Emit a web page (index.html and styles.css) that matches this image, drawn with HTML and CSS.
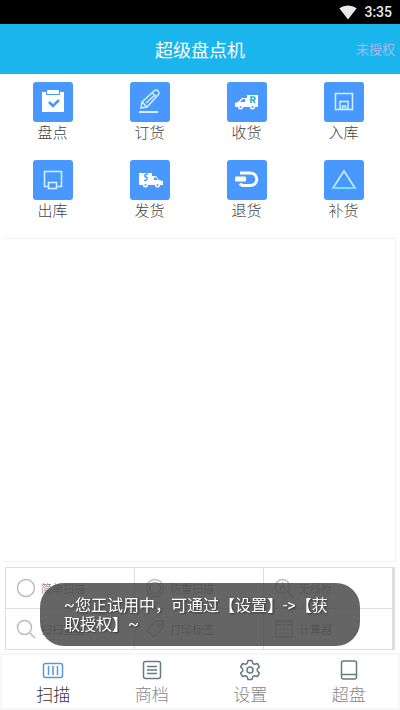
FILE: index.html
```html
<!DOCTYPE html>
<html lang="zh-CN">
<head>
<meta charset="utf-8">
<meta name="viewport" content="width=device-width, initial-scale=1">
<title>超级盘点机</title>
<link rel="stylesheet" href="styles.css">
</head>
<body>
<div class="status">
  <svg width="18" height="15" viewBox="0 0 18 15" aria-hidden="true"><path d="M9 14.500 0.300 3.300Q4 .5 9 .5t8.700 2.800z" fill="#e8e8e8"/></svg>
  <time>3:35</time>
</div>
<header class="header">
  <h1>超级盘点机</h1>
  <a class="license" href="#license">未授权</a>
</header>
<main class="main">
  <div class="apps">
    <button class="app"><span class="tile"><svg viewBox="0 0 40 40"><path fill="#fff" d="M9 10h4v3h14v-3h4v20H9z"/><rect x="14" y="8" width="12" height="4" rx="1" fill="#fff"/><path d="m16 20 4 4 6-6" fill="none" stroke="#4898ff" stroke-width="2.500"/></svg></span>盘点</button>
    <button class="app"><span class="tile"><svg viewBox="0 0 40 40" class="line"><path d="m11 26 1-6L24 9q3-2 4 0 2 2 0 4L17 25zM12 20l5 5M22 11l5 4M16 21l9-8"/><path d="M9 30h19" stroke-width="2"/></svg></span>订货</button>
    <button class="app"><span class="tile"><svg viewBox="0 0 40 40"><path fill="#fff" d="M20 13h11v12h-3a2.500 2.500 0 0 1-5 0h-7a2.500 2.500 0 0 1-5 0H8v-4l3-1 4-4h5z"/><path fill="#4898ff" d="m13 20 3-3h2v3z"/><path d="M24 21v-6h2q2 0 2 1.500T26 18h-2m2 0 2 3" fill="none" stroke="#29adc9" stroke-width="1.500"/><circle cx="13.500" cy="25" r="1" fill="#4898ff"/><circle cx="25.500" cy="25" r="1" fill="#4898ff"/></svg></span>收货</button>
    <button class="app"><span class="tile"><svg viewBox="0 0 40 40" class="line"><path d="M11.500 11.500h17v16h-17zM16 27.500v-8h8v8M18.500 27v-3h3v3"/></svg></span>入库</button>
    <button class="app"><span class="tile"><svg viewBox="0 0 40 40" class="line"><path d="M15.500 26.500h-4v-15h17v15h-4M15.500 22.500h8v6h-8z"/></svg></span>出库</button>
    <button class="app"><span class="tile"><svg viewBox="0 0 40 40"><path fill="#fff" d="M9 13h13v3h4l3 4 4 1v4h-3a2.500 2.500 0 0 1-5 0h-7a2.500 2.500 0 0 1-5 0H9z"/><path fill="#4898ff" d="M24 17.500h2l2 2.500h-4z"/><path d="M18 14q-4 0-3 2.500l2 1q1 3-3 3" fill="none" stroke="#4898ff" stroke-width="1.500"/><circle cx="15.500" cy="25" r="1" fill="#4898ff"/><circle cx="27.500" cy="25" r="1" fill="#4898ff"/></svg></span>发货</button>
    <button class="app"><span class="tile"><svg viewBox="0 0 40 40"><path d="M13 13h10c9 0 9 12.500 0 12.500h-6q-3 0-4-2" fill="none" stroke="#fff" stroke-width="3"/><rect x="8" y="16.500" width="11" height="5" rx="1" fill="#fff"/></svg></span>退货</button>
    <button class="app"><span class="tile"><svg viewBox="0 0 40 40" class="line"><path d="m20 11 11 17H9z"/><path d="M9 28h22" stroke="#62e5f5"/></svg></span>补货</button>
  </div>
  <section class="panel" aria-label="记录"></section>
  <div class="tools">
    <button class="tool"><svg viewBox="0 0 20 20"><circle cx="10" cy="10" r="8.500"/></svg>简单扫描</button>
    <button class="tool"><svg viewBox="0 0 20 20"><circle cx="10" cy="10" r="8.500"/><circle cx="10" cy="10" r="5.500"/></svg>防重扫描</button>
    <button class="tool"><svg viewBox="0 0 20 20"><circle cx="8.500" cy="8.500" r="7"/><path d="m14 14 5 5M6 12l2.500-7 2.500 7M7 9h3"/></svg>无线枪</button>
    <button class="tool"><svg viewBox="0 0 20 20"><circle cx="8.500" cy="8.500" r="7"/><path d="m14 14 5 5"/></svg>扫扫查查</button>
    <button class="tool"><svg viewBox="0 0 20 20"><path d="m2 11 9-9h7v7l-9 9z"/><circle cx="14" cy="6" r="1.500"/></svg>打印标签</button>
    <button class="tool"><svg viewBox="0 0 20 20"><rect x="2" y="2" width="16" height="16" rx="1"/><path d="M2 6h16M5 10h2m2 0h2m2 0h2M5 14h2m2 0h2m2 0h2" /></svg>计算器</button>
  </div>
</main>
<nav class="nav">
  <a class="active" href="#scan"><svg viewBox="0 0 22 22" stroke="#5795e0"><rect x="1.500" y="4.500" width="19" height="14" rx="2"/><path d="M6.500 7v9M11 7v9M15.500 7v9"/></svg>扫描</a>
  <a href="#files"><svg viewBox="0 0 22 22"><rect x="2.500" y="2.500" width="17" height="17" rx="2"/><path d="M6 7.500h10M6 11h10M6 14.500h10"/></svg>商档</a>
  <a href="#settings"><svg viewBox="0 0 22 22"><path d="M9 1.500h4l.8 2.800 1.700 1 2.900-.8 2 3.400-2.100 2.100v2l2.100 2.100-2 3.400-2.900-.8-1.700 1-.8 2.800H9l-.8-2.800-1.700-1-2.900.8-2-3.400L3.700 12v-2L1.600 7.900l2-3.400 2.900.8 1.700-1z" stroke-linejoin="round"/><circle cx="11" cy="11" r="3"/></svg>设置</a>
  <a href="#super"><svg viewBox="0 0 22 22"><rect x="3.500" y="2" width="15" height="18" rx="2"/><path d="M3.500 15.500h15"/></svg>超盘</a>
</nav>
<div class="toast" role="status">~您正试用中，可通过【设置】-&gt;【获取授权】~</div>
</body>
</html>
```
FILE: styles.css
```css
* { box-sizing: border-box; }
body {
  margin: 0;
  min-height: 100vh;
  display: flex;
  flex-direction: column;
  background: #fff;
  color: #444;
  font-family: "Noto Sans CJK SC", sans-serif;
  font-weight: 300;
}
button {
  border: 0;
  padding: 0;
  background: none;
  color: inherit;
  font-family: inherit;
  font-weight: inherit;
}
a { color: inherit; text-decoration: none; }
.status {
  height: 24px;
  padding: 0 8px;
  display: flex;
  justify-content: flex-end;
  align-items: center;
  gap: 7px;
  background: #000;
  color: #e8e8e8;
  font: 500 14px/24px Roboto, sans-serif;
}
.header {
  height: 50px;
  padding: 0 5px;
  display: grid;
  grid-template-columns: 1fr auto 1fr;
  align-items: center;
  background: #1bb5ee;
}
.header h1 {
  grid-column: 2;
  margin: 0;
  color: #fff;
  font-size: 18px;
  font-weight: 400;
  line-height: 26px;
}
.license { justify-self: end; color: #a8b6f4; font-size: 13px; font-weight: 400; line-height: 20px; }
.main {
  flex: 1;
  display: flex;
  flex-direction: column;
  padding: 8px 4px 3px;
}
.apps {
  display: grid;
  grid-template-columns: repeat(4, 1fr);
  row-gap: 18px;
  padding-right: 4px;
  margin-bottom: 18px;
}
.app {
  display: flex;
  flex-direction: column;
  align-items: center;
  font-size: 15px;
  line-height: 20px;
}
.tile { width: 40px; height: 40px; border-radius: 3px; background: #4898ff; }
.tile svg { display: block; width: 40px; height: 40px; }
.line { fill: none; stroke: #d3f1ff; stroke-width: 1.5; }
.panel {
  flex: 1;
  margin-bottom: 5px;
  border: 1px solid #f2f2f2;
  border-left: 0;
}
.tools {
  display: grid;
  grid-template-columns: repeat(3, 1fr);
  gap: 1px;
  margin: 0 1px;
  border: 1px solid #dedede;
  border-right-width: 3px;
  background: #dedede;
}
.tool {
  height: 40px;
  padding-left: 10px;
  display: flex;
  align-items: center;
  gap: 5px;
  background: #fff;
  color: #666;
  font-size: 11px;
}
.tool svg { width: 20px; height: 20px; fill: none; stroke: #bbb; stroke-width: 1.5; }
.nav {
  display: grid;
  grid-template-columns: repeat(4, 1fr);
  padding: 4px 0 2px 2px;
  border: 2px solid #f7f7f7;
  color: #888;
}
.nav a {
  display: flex;
  flex-direction: column;
  align-items: center;
  font-size: 17px;
  line-height: 25px;
}
.nav .active { color: #333; }
.nav svg { width: 22px; height: 22px; fill: none; stroke-width: 1.5; }
.nav a:not(.active) svg { stroke: #657c80; }
.toast {
  position: fixed;
  left: 40px;
  right: 40px;
  bottom: 64px;
  padding: 13px 24px 12px;
  border-radius: 24px;
  background: rgba(74, 74, 74, .85);
  color: #fff;
  font-family: Roboto, "Noto Sans CJK SC", sans-serif;
  font-size: 16px;
  font-weight: 400;
  line-height: 19px;
  text-shadow: 1px 1px 2px #333;
}
```
